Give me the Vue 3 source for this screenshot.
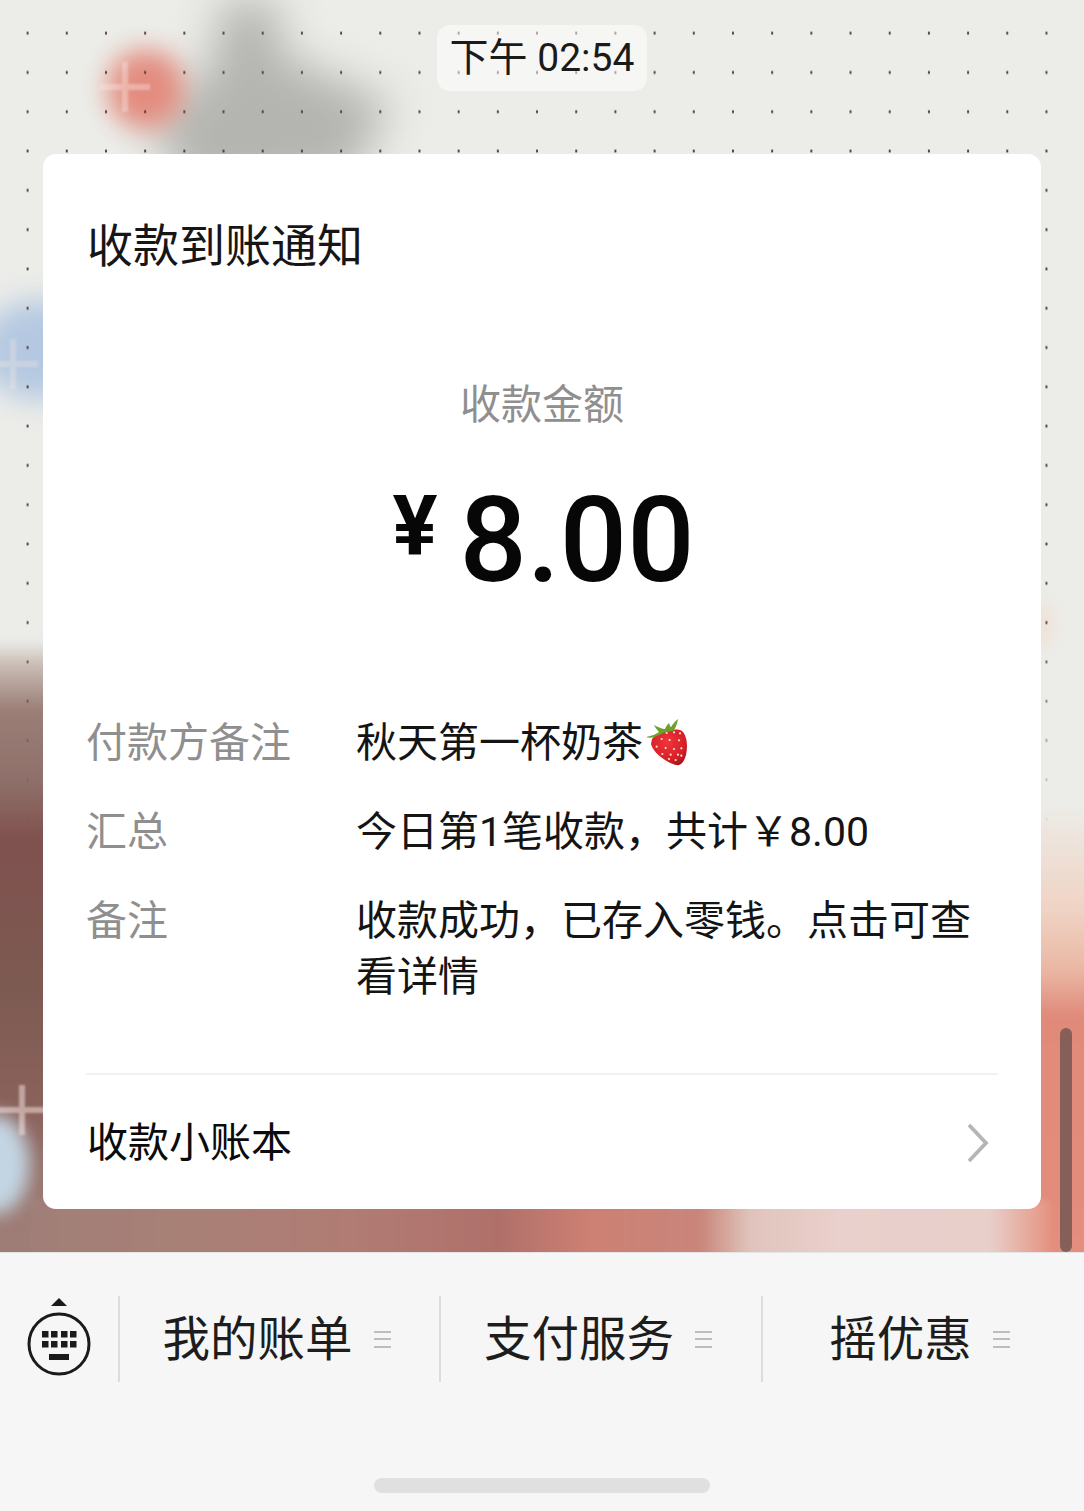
<script setup>
const rows = [
  { label: '付款方备注', value: '秋天第一杯奶茶', berry: true },
  { label: '汇总', value: '今日第1笔收款，共计￥8.00' },
  { label: '备注', value: '收款成功，已存入零钱。点击可查看详情' },
]
const menus = ['我的账单', '支付服务', '摇优惠']
const seeds = [[143,102],[165,100],[183,103],[128,120],[152,123],[180,124],[113,143],[140,147],[165,150],[187,148],[130,165],[155,167],[177,167],[150,180],[170,183],[187,170]]
  .map(([x, y]) => [x / 3 - 26, y / 3 - 20])
</script>

<template>
  <div class="page">
    <section class="chat">
      <div class="wallpaper" aria-hidden="true">
        <div class="soft"><div class="grey"></div></div>
        <div class="blob red"></div>
        <div class="blob blue"></div>
        <div class="blob peach"></div>
        <div class="blob left-col"></div>
        <div class="blob right-col"></div>
        <div class="blob strip"></div>
        <div class="blob iceblue"></div>
        <div class="dots"></div>
        <div class="plus p1"></div>
        <div class="plus p2"></div>
        <div class="plus p3"></div>
      </div>
      <div class="scrollbar"></div>
      <div class="time">下午 02:54</div>
      <article class="card">
        <h1 class="title">收款到账通知</h1>
        <div class="amount-label">收款金额</div>
        <div class="amount"><span class="yen">¥</span><span>8.00</span></div>
        <div class="rows">
          <div v-for="r in rows" :key="r.label" class="row">
            <div class="label">{{ r.label }}</div>
            <div class="value">{{ r.value }}<svg v-if="r.berry" class="berry" viewBox="0 0 44 48">
              <defs>
                <radialGradient id="bg" cx="45%" cy="35%" r="70%">
                  <stop offset="0" stop-color="#f0353a"/>
                  <stop offset="0.7" stop-color="#d81f28"/>
                  <stop offset="1" stop-color="#a8141c"/>
                </radialGradient>
              </defs>
              <path d="M7 20C12 13 30 8 37 12C42 16 43 28 41 36C39 43 36 47 31 46C22 44 8 34 6 25Z" fill="url(#bg)"/>
              <path d="M1 18C7 17 11 15 14 13C12 11 10 8 9 6C13 8 17 10 20 10C21 7 23 5 24 4C25 6 25 8 26 8C28 5 30 2 33 0C32 5 31 9 28 12C22 12 16 15 12 17C8 19 4 19 1 18Z" fill="#6f9f2c"/>
              <circle v-for="(s, i) in seeds" :key="i" :cx="s[0]" :cy="s[1]" r="1.1" fill="#f6e6cf"/>
            </svg></div>
          </div>
        </div>
        <div class="ledger">
          <span class="ledger-text">收款小账本</span>
          <svg class="chev" viewBox="0 0 24 40"><path d="M3 2L20 20L3 38" fill="none" stroke="#b5b5b5" stroke-width="3.8"/></svg>
        </div>
      </article>
    </section>
    <footer class="bar">
      <div class="menus">
        <div class="kbd">
          <svg viewBox="0 0 66 84" width="66" height="84">
            <path d="M33 1L41 9H25Z" fill="#1b1b1b"/>
            <circle cx="33" cy="47" r="30" fill="none" stroke="#1b1b1b" stroke-width="3"/>
            <g fill="#1b1b1b">
              <rect x="16" y="34" width="6.5" height="6.5"/><rect x="25" y="34" width="6.5" height="6.5"/><rect x="35" y="34" width="6.5" height="6.5"/><rect x="44" y="34" width="6.5" height="6.5"/>
              <rect x="16" y="44" width="6.5" height="6.5"/><rect x="25" y="44" width="6.5" height="6.5"/><rect x="35" y="44" width="6.5" height="6.5"/><rect x="44" y="44" width="6.5" height="6.5"/>
              <rect x="23" y="57" width="20" height="6"/>
            </g>
          </svg>
        </div>
        <div v-for="m in menus" :key="m" class="menu">
          <span>{{ m }}</span>
          <i class="lines"></i>
        </div>
      </div>
      <div class="home"></div>
    </footer>
  </div>
</template>

<style>
html, body { margin: 0; padding: 0; background: #f6f6f6; }
</style>

<style scoped>
.page {
  width: 1084px;
  height: 1511px;
  display: flex;
  flex-direction: column;
  overflow: hidden;
  font-family: Roboto, "Noto Sans CJK SC", sans-serif;
  color: #111;
}
.chat {
  position: relative;
  height: 1252px;
  flex: none;
  overflow: hidden;
  display: flex;
  flex-direction: column;
  align-items: center;
  padding-top: 25px;
  box-sizing: border-box;
}
.wallpaper {
  position: absolute;
  inset: 0;
  overflow: hidden;
  background: #ecede9;
}
.blob { position: absolute; }
.soft { position: absolute; inset: 0; filter: blur(22px); }
.grey {
  position: absolute;
  inset: 0;
  background: #b4b5b1;
  clip-path: polygon(228px -30px, 276px -30px, 282px 55px, 392px 103px, 350px 180px, 190px 200px, 150px 120px, 210px 70px);
}
.red { left: 108px; top: 50px; width: 76px; height: 78px; border-radius: 45%; background: #e38c7f; filter: blur(13px); }
.blue { left: -20px; top: 300px; width: 120px; height: 100px; border-radius: 50%; background: #b4c8e1; filter: blur(14px); }
.peach { left: 1030px; top: 600px; width: 22px; height: 50px; border-radius: 50%; background: #f0e0d4; filter: blur(9px); }
.left-col {
  left: -30px; top: 640px; width: 110px; height: 640px;
  background: linear-gradient(180deg, #ecede9 0, #c9bcb4 25px, #9a7e76 70px, #8f706a 140px, #80514e 200px, #7c5a52 350px, #8b625c 470px, #9c7b74 570px, #a07f78 100%);
  filter: blur(5px);
}
.right-col {
  left: 1020px; top: 800px; width: 90px; height: 480px;
  background: linear-gradient(180deg, #ecede9 0, #efd3c4 110px, #eab7a3 170px, #e08a7a 215px, #e28c7c 400px, #e38f80 100%);
  filter: blur(5px);
}
.strip {
  left: 30px; top: 1200px; width: 1020px; height: 70px;
  background: linear-gradient(90deg, #a07f78 0, #a98076 170px, #b07c74 320px, #b0706a 470px, #cd8074 560px, #c9857a 670px, #e0c4bc 720px, #ead0cc 810px, #e8cfca 960px, #e59482 1020px);
  filter: blur(3px);
}
.iceblue { left: -40px; top: 1114px; width: 70px; height: 100px; border-radius: 50%; background: #c3d5e3; filter: blur(9px); }
.dots {
  position: absolute;
  inset: 0 0 auto 0;
  height: 840px;
  background-image: radial-gradient(ellipse 1.3px 2px, #5a3f40 0, #5a3f40 60%, transparent 100%);
  background-size: 39.2px 39.3px;
  background-position: 8px 13.5px;
  -webkit-mask-image:
    linear-gradient(90deg, #000 0, #000 44px, transparent 44px),
    linear-gradient(180deg, #000 0, #000 620px, transparent 840px);
  mask-image: linear-gradient(180deg, #000 0, #000 620px, transparent 840px);
}
.plus { position: absolute; width: 50px; height: 50px; opacity: .38; filter: blur(1.2px);
  background:
    linear-gradient(#fbe9e4, #fbe9e4) center / 50px 6px no-repeat,
    linear-gradient(#fbe9e4, #fbe9e4) center / 6px 50px no-repeat; }
.p1 { left: 100px; top: 62px; }
.p2 { left: -12px; top: 339px; opacity: .3; }
.p3 { left: -3px; top: 1085px; opacity: .5; }
.scrollbar {
  position: absolute;
  left: 1060px;
  top: 1028px;
  width: 12px;
  height: 224px;
  border-radius: 6px;
  background: #855f58;
}
.time {
  position: relative;
  height: 66px;
  line-height: 66px;
  padding: 0 13px;
  border-radius: 13px;
  background: rgba(255, 255, 255, .5);
  font-size: 39px;
  color: #1a1a1a;
  box-sizing: border-box;
  margin-bottom: 63px;
  white-space: nowrap;
}
.card {
  position: relative;
  width: 998px;
  height: 1055px;
  background: #fff;
  border-radius: 13px;
  padding: 0 43px;
  box-sizing: border-box;
}
.title {
  margin: 0;
  padding: 62px 0 0 1px;
  font-size: 46px;
  line-height: 60px;
  font-weight: 400;
  color: #161616;
}
.amount-label {
  margin-top: 101px;
  text-align: center;
  font-size: 41px;
  line-height: 56px;
  color: #8f8f8f;
}
.amount {
  display: flex;
  justify-content: center;
  align-items: center;
  gap: 22px;
  margin-top: 29px;
  padding-left: 3px;
  height: 156px;
  font-size: 118.5px;
  font-weight: 500;
  color: #070707;
}
.yen { font-size: 84px; font-weight: 700; position: relative; top: -14px; }
.rows { margin-top: 97px; display: flex; flex-direction: column; gap: 33px; }
.row { display: flex; font-size: 41px; line-height: 56px; }
.label { width: 270px; flex: none; color: #8f8f8f; }
.value { flex: 1; color: #141414; }
.berry { width: 44px; height: 48px; vertical-align: -10px; margin-left: 2px; }
.ledger {
  display: flex;
  align-items: center;
  justify-content: space-between;
  margin-top: 68px;
  height: 134px;
  border-top: 2px solid #f1f1f1;
  font-size: 41px;
  color: #0b0b0b;
  padding: 0 8px 0 1px;
  box-sizing: border-box;
}
.ledger-text { position: relative; top: -2px; }
.chev { width: 24px; height: 40px; position: relative; top: 2px; }
.bar {
  position: relative;
  flex: 1;
  background: #f6f6f6;
  border-top: 1px solid #e5e5e5;
  box-sizing: border-box;
}
.menus { display: flex; align-items: stretch; height: 86px; margin-top: 43px; }
.kbd { width: 118px; flex: none; box-sizing: border-box; padding: 0 0 0 26px; margin-top: 1px; }
.menu {
  flex: none;
  width: 322px;
  margin-left: -0.5px;
  border-left: 2px solid #dcdcdc;
  box-sizing: border-box;
  display: flex;
  align-items: center;
  justify-content: center;
  gap: 21px;
  padding-right: 6px;
  font-size: 47.5px;
  color: #1d1d1d;
}
.menu span { position: relative; top: -4px; }
.lines {
  width: 17px;
  height: 17px;
  border-top: 2px solid #bdbdbd;
  border-bottom: 2px solid #bdbdbd;
  background: linear-gradient(#bdbdbd, #bdbdbd) center / 100% 2px no-repeat;
  box-sizing: border-box;
}
.home {
  position: absolute;
  left: 374px;
  top: 225px;
  width: 336px;
  height: 15px;
  border-radius: 8px;
  background: #e0e0e0;
}
</style>
